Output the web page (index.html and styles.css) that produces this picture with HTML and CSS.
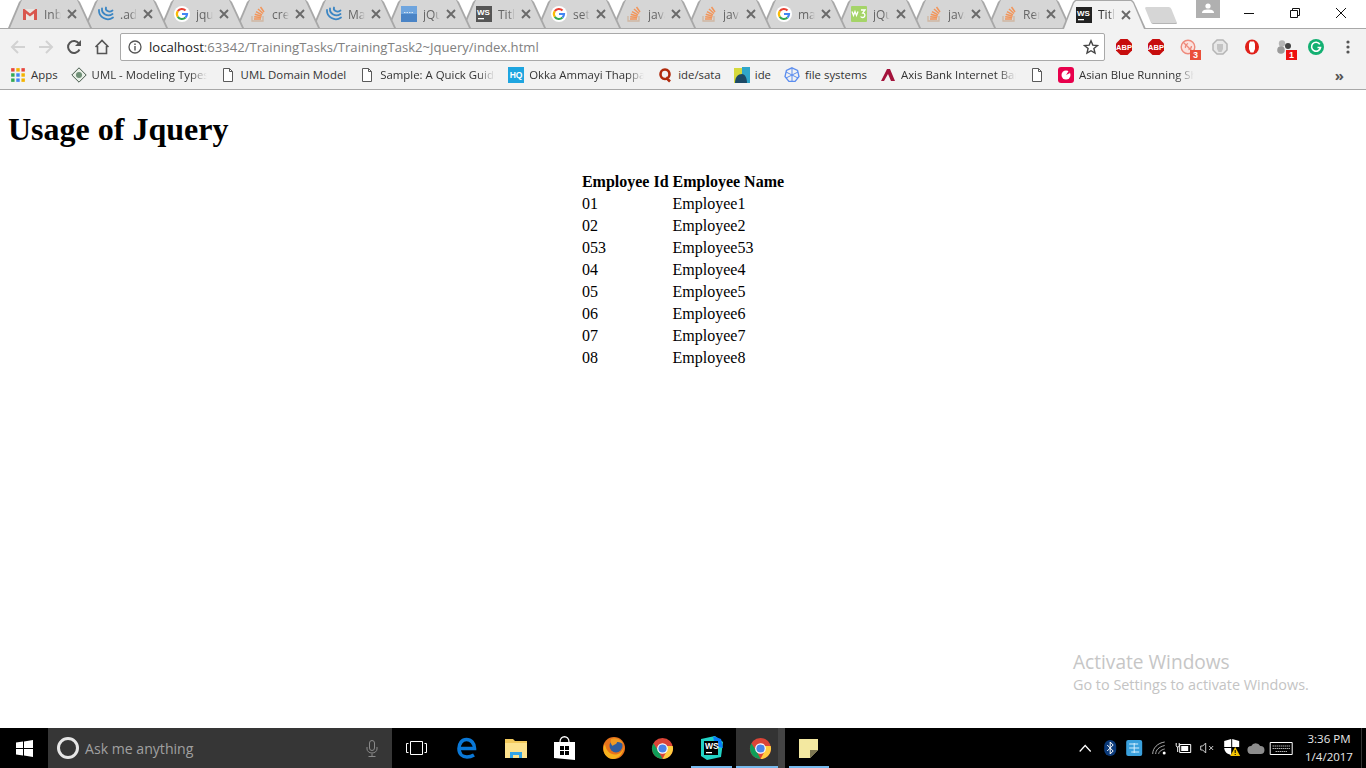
FILE: index.html
```html
<!DOCTYPE html>
<html lang="en">
<head>
    <meta charset="UTF-8">
    <title>Usage of Jquery</title>
    <link rel="stylesheet" href="styles.css">
</head>
<body>
    <svg class="defs" width="0" height="0">
        <symbol id="i-gmail" viewBox="0 0 16 16"><path fill="#e9e6e2" d="M1 3h14v11H1z"/><path fill="#d9574e" d="M1 3v11h3V7.5l4 3 4-3V14h3V3h-1.500L8 7.500 2.500 3z"/></symbol>
        <symbol id="i-jq" viewBox="0 0 16 16"><g fill="none" stroke="#3b86c4" stroke-width="1.800" stroke-linecap="round"><path d="M1 4c-.5 7 8 12 14 7.500"/><path d="M4 2.500c-.5 5 5.500 9 10.500 5.500"/><path d="M8 1.500c-1 3 3 5.500 6.500 3"/></g></symbol>
        <symbol id="i-g" viewBox="0 0 16 16"><circle cx="8" cy="8" r="8" fill="#fff"/><g fill="none" stroke-width="2.200"><path stroke="#e94235" d="M3.800 5.200A5 5 0 0 1 11.500 4.500"/><path stroke="#fabb05" d="M3.800 10.800a5 5 0 0 1 0-5.600"/><path stroke="#34a853" d="M3.800 10.800a5 5 0 0 0 7.700.7"/><path stroke="#4285f4" d="M11.500 11.500A5 5 0 0 0 13 8H8"/></g></symbol>
        <symbol id="i-so" viewBox="0 0 16 16"><path fill="none" stroke="#cfb7a2" stroke-width="1.300" d="M2 10v5h11v-5"/><g fill="none" stroke="#f2955a" stroke-width="1.500"><path d="M4 13h7"/><path d="M4.200 10.800l7 .8"/><path d="M4.800 8.200l6.800 2"/><path d="M6 5.600l6 3.200"/><path d="M8 3l5 4.500"/><path d="M10.500 1l3.500 5"/></g></symbol>
        <symbol id="i-ws" viewBox="0 0 16 16"><path fill="currentColor" d="M0 0h16v16H0z"/><text x="1" y="9" class="ws-text">WS</text><path fill="#fff" d="M2 12h6v1.300H2z"/></symbol>
        <symbol id="i-jqbox" viewBox="0 0 16 16"><path fill="#6fa5de" d="M0 0h16v16H0z"/><path fill="#4a84c6" d="M0 8h16v8H0z"/><path stroke="#d8e6f5" d="M3 6.500h10" stroke-dasharray="1.500 1"/></symbol>
        <symbol id="i-w3" viewBox="0 0 16 16"><rect width="16" height="16" rx="1" fill="#a5d468"/><path fill="none" stroke="#fff" stroke-width="1.300" d="M1 5.500l1.500 4 1.500-4 1.500 4 1.500-4M10 4h4l-2.200 3c2.600-.2 3 4.500-.3 4.500-1 0-1.500-.4-1.900-1"/></symbol>
        <symbol id="i-page" viewBox="0 0 16 16"><path fill="#fff" stroke="#5a5a5a" d="M3.500 1.500h6l3 3v10h-9z"/><path fill="none" stroke="#5a5a5a" d="M9.500 1.500v3h3"/></symbol>
        <symbol id="i-chrome" viewBox="0 0 24 24"><circle cx="12" cy="12" r="11" fill="#db4437"/><path fill="#ffcd40" d="M22.700 9.500A11 11 0 0 1 12 23l5-9.500-.5-4z"/><path fill="#0f9d58" d="M2.500 6.500L8 15l4 8a11 11 0 0 1-9.500-16.500z"/><circle cx="12" cy="12" r="5.600" fill="#fff"/><circle cx="12" cy="12" r="4.300" fill="#4a83e8"/></symbol>
        <symbol id="i-abp" viewBox="0 0 18 18"><path fill="#c70d0d" d="M5.500 1h7L17 5.500v7L12.500 17h-7L1 12.500v-7z"/><text x="9" y="11.800" class="abp-text">ABP</text></symbol>
        <symbol id="i-x" viewBox="0 0 10 10"><path fill="none" stroke="#6a6a6a" stroke-width="1.900" d="M1 1l8 8M9 1L1 9"/></symbol>
    </svg>

    <div class="tabstrip">
        <div class="tab"><svg class="fav"><use href="#i-gmail"/></svg><span class="tab-title">Inbox</span><svg class="tab-x"><use href="#i-x"/></svg></div>
        <div class="tab"><svg class="fav"><use href="#i-jq"/></svg><span class="tab-title">.add</span><svg class="tab-x"><use href="#i-x"/></svg></div>
        <div class="tab"><svg class="fav"><use href="#i-g"/></svg><span class="tab-title">jquery</span><svg class="tab-x"><use href="#i-x"/></svg></div>
        <div class="tab"><svg class="fav"><use href="#i-so"/></svg><span class="tab-title">create</span><svg class="tab-x"><use href="#i-x"/></svg></div>
        <div class="tab"><svg class="fav"><use href="#i-jq"/></svg><span class="tab-title">Manip</span><svg class="tab-x"><use href="#i-x"/></svg></div>
        <div class="tab"><svg class="fav"><use href="#i-jqbox"/></svg><span class="tab-title">jQuery</span><svg class="tab-x"><use href="#i-x"/></svg></div>
        <div class="tab"><svg class="fav ws-dim"><use href="#i-ws"/></svg><span class="tab-title">Title</span><svg class="tab-x"><use href="#i-x"/></svg></div>
        <div class="tab"><svg class="fav"><use href="#i-g"/></svg><span class="tab-title">set</span><svg class="tab-x"><use href="#i-x"/></svg></div>
        <div class="tab"><svg class="fav"><use href="#i-so"/></svg><span class="tab-title">java</span><svg class="tab-x"><use href="#i-x"/></svg></div>
        <div class="tab"><svg class="fav"><use href="#i-so"/></svg><span class="tab-title">java</span><svg class="tab-x"><use href="#i-x"/></svg></div>
        <div class="tab"><svg class="fav"><use href="#i-g"/></svg><span class="tab-title">make</span><svg class="tab-x"><use href="#i-x"/></svg></div>
        <div class="tab"><svg class="fav"><use href="#i-w3"/></svg><span class="tab-title">jQuery</span><svg class="tab-x"><use href="#i-x"/></svg></div>
        <div class="tab"><svg class="fav"><use href="#i-so"/></svg><span class="tab-title">java</span><svg class="tab-x"><use href="#i-x"/></svg></div>
        <div class="tab"><svg class="fav"><use href="#i-so"/></svg><span class="tab-title">Remove</span><svg class="tab-x"><use href="#i-x"/></svg></div>
        <div class="tab active"><svg class="fav ws-dark"><use href="#i-ws"/></svg><span class="tab-title">Title</span><svg class="tab-x"><use href="#i-x"/></svg></div>
        <div class="newtab"></div>
        <div class="profile">
            <svg width="12" height="10" viewBox="0 0 12 10"><circle cx="6" cy="3" r="2.600" fill="#fff"/><path fill="#fff" d="M0 10c0-3 3-3.500 6-3.500s6 .5 6 3.500z"/></svg>
        </div>
        <div class="winbtn"><svg width="10" height="10" viewBox="0 0 10 10"><path stroke="#111" d="M0 5.500h10"/></svg></div>
        <div class="winbtn"><svg width="10" height="10" viewBox="0 0 10 10"><path fill="none" stroke="#111" d="M.5 2.500h7v7h-7zM2.500 2.500v-2h7v7h-2"/></svg></div>
        <div class="winbtn"><svg width="10" height="10" viewBox="0 0 10 10"><path stroke="#111" d="M0 0l10 10M10 0L0 10"/></svg></div>
    </div>

    <div class="toolbar">
        <div class="navbtn"><svg width="16" height="16" viewBox="0 0 16 16"><path fill="none" stroke="#d2d2d2" stroke-width="2" d="M15 8H2M8 2L2 8l6 6"/></svg></div>
        <div class="navbtn"><svg width="16" height="16" viewBox="0 0 16 16"><path fill="none" stroke="#d2d2d2" stroke-width="2" d="M1 8h13M8 2l6 6-6 6"/></svg></div>
        <div class="navbtn"><svg width="16" height="16" viewBox="0 0 16 16"><path fill="none" stroke="#555" stroke-width="2" d="M13.500 10.500A6 6 0 1 1 13 4.500"/><path fill="#555" d="M15 1v6H9z"/></svg></div>
        <div class="navbtn"><svg width="16" height="16" viewBox="0 0 16 16"><path fill="none" stroke="#555" stroke-width="1.600" d="M1.500 8L8 1.500 14.500 8M3.500 7v7.500h9V7"/></svg></div>
        <div class="omnibox">
            <svg class="info" width="14" height="14" viewBox="0 0 14 14"><circle cx="7" cy="7" r="6" fill="none" stroke="#555" stroke-width="1.300"/><path fill="#555" d="M6.300 6h1.400v4.500H6.300zM6.300 3.500h1.400v1.400H6.300z"/></svg>
            <span class="url"><span class="host">localhost</span>:63342/TrainingTasks/TrainingTask2~Jquery/index.html</span>
            <svg class="star" width="16" height="16" viewBox="0 0 16 16"><path fill="none" stroke="#444" stroke-width="1.400" d="M8 1.800l1.800 4.300 4.700.4-3.600 3 1.100 4.600L8 11.700l-4 2.400 1.100-4.600-3.600-3 4.700-.4z"/></svg>
        </div>
        <div class="ext"><svg width="18" height="18"><use href="#i-abp"/></svg></div>
        <div class="ext"><svg width="18" height="18"><use href="#i-abp"/></svg></div>
        <div class="ext">
            <svg width="16" height="16" viewBox="0 0 16 16"><circle cx="8" cy="8" r="6.800" fill="#fbe3df" stroke="#ee8a7c" stroke-width="1.400"/><path fill="none" stroke="#ee8a7c" stroke-width="1.300" d="M3 3l10 10M8 4.500c-2 1-3 2.500-2.500 4.500M11.500 7c0 2-1 3-3 3.500"/></svg>
            <span class="badge orange">3</span>
        </div>
        <div class="ext"><svg width="16" height="16" viewBox="0 0 16 16"><path fill="#e8e8e8" stroke="#b5b5b5" stroke-width="1.500" d="M5 1h6l4 4v6l-4 4H5l-4-4V5z"/><path fill="#c4c4c4" d="M5 5h6v5l-1.500 3h-3L5 10z"/></svg></div>
        <div class="ext"><svg width="16" height="16" viewBox="0 0 16 16"><ellipse cx="8" cy="8" rx="7" ry="7.500" fill="#e0201a"/><path fill="#fff" d="M5 5l1-2.500h4L11 5v5l-1.500 3.500h-3L5 10z"/></svg></div>
        <div class="ext">
            <svg width="16" height="16" viewBox="0 0 16 16"><circle cx="6" cy="4.500" r="3.200" fill="#b5b5b5"/><circle cx="12" cy="7" r="3" fill="#444"/><circle cx="5" cy="11" r="3.800" fill="#9a9a9a"/></svg>
            <span class="badge red">1</span>
        </div>
        <div class="ext"><svg width="16" height="16" viewBox="0 0 16 16"><circle cx="8" cy="8" r="8" fill="#13b072"/><path fill="none" stroke="#fff" stroke-width="1.600" d="M11.800 5.200A4.500 4.500 0 1 0 12.500 8.500H9.500"/></svg></div>
        <div class="ext"><svg width="4" height="14" viewBox="0 0 4 14"><circle cx="2" cy="2" r="1.600" fill="#555"/><circle cx="2" cy="7" r="1.600" fill="#555"/><circle cx="2" cy="12" r="1.600" fill="#555"/></svg></div>
    </div>

    <div class="bookmarks">
        <div class="bm"><svg class="fav" viewBox="0 0 14 14"><g><path fill="#e8453c" d="M1 1h3v3H1z"/><path fill="#f4b400" d="M5.500 1h3v3h-3z"/><path fill="#e8453c" d="M10 1h3v3h-3z"/><path fill="#34a853" d="M1 5.500h3v3H1z"/><path fill="#4285f4" d="M5.500 5.500h3v3h-3z"/><path fill="#f4b400" d="M10 5.500h3v3h-3z"/><path fill="#34a853" d="M1 10h3v3H1z"/><path fill="#4285f4" d="M5.500 10h3v3h-3z"/><path fill="#f4b400" d="M10 10h3v3h-3z"/></g></svg><span>Apps</span></div>
        <div class="bm"><svg class="fav" viewBox="0 0 16 16"><path fill="#e8efe6" stroke="#45584a" d="M8 .8L15.200 8 8 15.200.8 8z"/><circle cx="8" cy="8" r="3" fill="#6f8f76"/></svg><span class="cut">UML - Modeling Types</span></div>
        <div class="bm"><svg class="fav"><use href="#i-page"/></svg><span>UML Domain Model</span></div>
        <div class="bm"><svg class="fav"><use href="#i-page"/></svg><span class="cut">Sample: A Quick Guide</span></div>
        <div class="bm"><svg class="fav" viewBox="0 0 16 16"><path fill="#1ea5e0" d="M0 0h16v16H0z"/><text x="8" y="11" class="hq-text">HQ</text></svg><span class="cut">Okka Ammayi Thappa</span></div>
        <div class="bm"><svg class="fav" viewBox="0 0 16 16"><path fill="none" stroke="#b02a0c" stroke-width="2.600" d="M8 2.500c-6 0-6 9.500 0 9.500s6-9.500 0-9.500zM9 10.500l4 4"/></svg><span>ide/sata</span></div>
        <div class="bm"><svg class="fav" viewBox="0 0 16 16"><path fill="#d5d93c" d="M0 1h8v15H0z"/><path fill="#2fa6c9" d="M8 0h8v16H8z"/><path fill="#1d4a66" d="M1 16c0-6 3-9 7-9 3 0 5 4 5 9z"/></svg><span>ide</span></div>
        <div class="bm"><svg class="fav" viewBox="0 0 16 16"><g fill="none" stroke="#5b8def"><path stroke-width="1.300" d="M8 .8l5.600 2.700L15 9.500l-3.900 4.900H4.900L1 9.500l1.400-6z"/><path d="M8 1v14M2 5l12 6M14 5L2 11"/></g></svg><span>file systems</span></div>
        <div class="bm"><svg class="fav" viewBox="0 0 16 16"><path fill="#a4133c" d="M7 2L1 14h3l4-7 3 7h4L10 2z"/></svg><span class="cut">Axis Bank Internet Banking</span></div>
        <div class="bm"><svg class="fav"><use href="#i-page"/></svg></div>
        <div class="bm"><svg class="fav" viewBox="0 0 16 16"><rect width="16" height="16" rx="3" fill="#e8004c"/><circle cx="8" cy="8" r="4.500" fill="#fff"/><path fill="#e8004c" d="M8 8l4-2-1-2.500z"/></svg><span class="cut">Asian Blue Running Shoes</span></div>
        <div class="chevron">»</div>
    </div>

    <main class="page">
        <h1>Usage of Jquery</h1>
        <table class="emp-table">
            <thead>
                <tr><th>Employee Id</th><th>Employee Name</th></tr>
            </thead>
            <tbody>
                <tr><td>01</td><td>Employee1</td></tr>
                <tr><td>02</td><td>Employee2</td></tr>
                <tr><td>053</td><td>Employee53</td></tr>
                <tr><td>04</td><td>Employee4</td></tr>
                <tr><td>05</td><td>Employee5</td></tr>
                <tr><td>06</td><td>Employee6</td></tr>
                <tr><td>07</td><td>Employee7</td></tr>
                <tr><td>08</td><td>Employee8</td></tr>
            </tbody>
        </table>
        <div class="activate">
            <div class="activate-title">Activate Windows</div>
            <div class="activate-sub">Go to Settings to activate Windows.</div>
        </div>
    </main>

    <div class="taskbar">
        <div class="start"><svg width="17" height="17" viewBox="0 0 17 17"><path fill="#fff" d="M0 2.500L7 1.500v6.500H0zM8 1.400L17 0v8H8zM0 9h7v6.500l-7-1zM8 9h9v8l-9-1.400z"/></svg></div>
        <div class="search">
            <span class="cortana"></span>
            <span class="search-text">Ask me anything</span>
            <svg class="mic" width="12" height="17" viewBox="0 0 12 17"><g fill="none" stroke="#8a8a8a"><rect x="3.500" y=".5" width="5" height="10" rx="2.500"/><path d="M1 7v2a5 4 0 0 0 10 0V7M6 13.500v3M2.500 16.500h7"/></g></svg>
        </div>
        <div class="slot taskview"><svg width="21" height="14" viewBox="0 0 21 14"><path fill="none" stroke="#fff" d="M4.500.5h12v13h-12zM2.500 2.500H.5v9h2M18.500 2.500h2v9h-2"/></svg></div>
        <div class="slot"><svg width="20" height="22" viewBox="0 0 20 22"><path fill="none" stroke="#0a78d7" stroke-width="3.600" d="M2 11.500h15.500C17.500 6 14 2.500 9.500 2.500 5 2.500 2 6.500 2 11.500c0 5.500 3.500 8.500 8 8.500 3 0 5-.8 7-2"/></svg></div>
        <div class="slot"><svg width="22" height="20" viewBox="0 0 22 20"><path fill="#f2c95c" d="M0 1h8l2 2h12v4H0z"/><path fill="#fde28e" d="M0 5h22v15H0z"/><path fill="#35a5e6" d="M5 20v-6h12v6h-3v-3H8v3z"/></svg></div>
        <div class="slot"><svg width="21" height="24" viewBox="0 0 21 24"><path fill="none" stroke="#fff" stroke-width="1.300" d="M6 6c0-7 9-7 9 0"/><path fill="#fff" d="M0 6h21v18L0 22z"/><path fill="#000" d="M6 10h4v4H6zM11 10h4v4h-4zM6 15h4v4H6zM11 15h4v4h-4z"/></svg></div>
        <div class="slot"><svg width="22" height="22" viewBox="0 0 22 22"><circle cx="11" cy="11" r="11" fill="#e8731c"/><circle cx="13" cy="9" r="6.500" fill="#2f5d9e"/><path fill="#f7b21e" d="M2 7c1 8 7 12 13 10 3-1 5-4 6-7-1 7-6 12-11 12C3 22-2 14 2 7z"/><path fill="#f09a22" d="M8 2c5-2 10 0 12 5-3-2-5-2-6-2 0 3-4 2-4 4-2-1-3-4-2-7z"/></svg></div>
        <div class="slot"><svg width="23" height="23"><use href="#i-chrome"/></svg></div>
        <div class="slot slot-ws"><svg width="24" height="24" viewBox="0 0 24 24"><path fill="#22d3c5" d="M2 3l14-3 8 6-2 15-14 3-6-4z"/><path fill="#087cfa" d="M14 0l8 3 2 9-8-2z"/><path fill="#000" d="M5 5h14v14H5z"/><text x="6" y="13" class="ws-big">WS</text><path fill="#fff" d="M7 16h6v1.300H7z"/></svg></div>
        <div class="slot running"><svg width="23" height="23"><use href="#i-chrome"/></svg></div>
        <div class="slot slot-sticky"><svg width="19" height="19" viewBox="0 0 19 19"><path fill="#f3e8a0" d="M0 0h19v11l-8 8H0z"/><path fill="#7d7652" d="M19 11h-8v8z"/></svg></div>
        <div class="tray">
            <svg class="tray-i" height="8" viewBox="0 0 13 8"><path fill="none" stroke="#fff" stroke-width="1.200" d="M1 7.500l5.500-6 5.500 6"/></svg>
            <svg class="tray-i" height="16" viewBox="0 0 12 16"><rect width="12" height="16" rx="6" fill="#0b3a7a"/><path fill="none" stroke="#fff" d="M3 5l6 6-3 3V2l3 3-6 6"/></svg>
            <svg class="tray-i" height="16" viewBox="0 0 16 16"><rect width="16" height="16" rx="2" fill="#3aa0dc"/><path fill="none" stroke="#d6f0ff" d="M3 4h9M3 8h10M5 12h8M8 3v10"/></svg>
            <svg class="tray-i" height="14" viewBox="0 0 15 14"><g fill="none" stroke="#aaa"><path d="M1 13C1 7 6 2 13 1"/><path d="M4 13c0-4 3-7 9-8.500"/><path d="M7 13c0-2 2-4 6-5"/></g><circle cx="12.500" cy="12" r="1.500" fill="#fff"/></svg>
            <svg class="tray-i" height="12" viewBox="0 0 16 12"><path fill="none" stroke="#fff" d="M4.500 2.500h11v8h-11z"/><path fill="#fff" d="M6 4h7v5H6z"/><path fill="none" stroke="#fff" d="M1 1v2.500a1.500 1.500 0 0 0 3 0V1M2.500 5v5"/></svg>
            <svg class="tray-i" height="12" viewBox="0 0 15 12"><path fill="none" stroke="#ccc" d="M1 4v4h2l3 3V1L3 4zM9.500 4l4 4M13.500 4l-4 4"/></svg>
            <svg class="tray-i" height="18" viewBox="0 0 16 18"><path fill="#fff" d="M0 2l7-2v8H0zM8 0l7 2v6H8zM0 9h7v7C3 15 .5 13 0 9z"/><path fill="#f7c600" d="M11 8l5 9H6z"/><path fill="#000" d="M10.500 11h1v3h-1zM10.500 15h1v1h-1z"/></svg>
            <svg class="tray-i" height="11" viewBox="0 0 17 11"><path fill="#8c8c8c" d="M4 11a4 4 0 0 1-.5-8A5 5 0 0 1 12.500 3 4 4 0 0 1 13 11z"/></svg>
            <svg class="tray-i" height="13" viewBox="0 0 23 13"><path fill="none" stroke="#fff" d="M.5.500h22v12H.5z"/><path stroke="#fff" stroke-dasharray="1 1" d="M3 4h17M3 6.500h17M6 9.500h11"/></svg>
        </div>
        <div class="clock"><div>3:36 PM</div><div>1/4/2017</div></div>
        <div class="desktop-edge"></div>
    </div>
</body>
</html>
```

FILE: styles.css
```css
* {
    box-sizing: border-box;
}
html, body {
    height: 100%;
}
body {
    margin: 0;
    display: flex;
    flex-direction: column;
    overflow: hidden;
    background-color: #fff;
    font-family: "Open Sans", sans-serif;
    font-size: 12px;
    color: #333;
}
.defs {
    position: absolute;
}
.fav {
    width: 16px;
    height: 16px;
    flex: none;
}

/* tab strip */
.tabstrip {
    display: flex;
    align-items: flex-start;
    height: 29px;
    padding-left: 7px;
    border-bottom: 1px solid #a8a8a8;
    flex: none;
}
.tab {
    position: relative;
    isolation: isolate;
    display: flex;
    align-items: center;
    width: 85px;
    height: 28px;
    margin-right: -10px;
    padding-left: 15px;
    flex: none;
    color: #666;
}
.tab:nth-child(-n+4) {
    margin-right: -9px;
}
/* tabs left of the active one sit over their right neighbour */
.tab:nth-child(1) { z-index: 14; }
.tab:nth-child(2) { z-index: 13; }
.tab:nth-child(3) { z-index: 12; }
.tab:nth-child(4) { z-index: 11; }
.tab:nth-child(5) { z-index: 10; }
.tab:nth-child(6) { z-index: 9; }
.tab:nth-child(7) { z-index: 8; }
.tab:nth-child(8) { z-index: 7; }
.tab:nth-child(9) { z-index: 6; }
.tab:nth-child(10) { z-index: 5; }
.tab:nth-child(11) { z-index: 4; }
.tab:nth-child(12) { z-index: 3; }
.tab:nth-child(13) { z-index: 2; }
.tab:nth-child(14) { z-index: 1; }
.tab.active { z-index: 20; }
.tab::before,
.tab::after {
    content: "";
    position: absolute;
    inset: 0;
    z-index: -1;
}
.tab::before {
    background-color: #a8a8a8;
    clip-path: polygon(1px 100%, 12px 2px, 14px 0, calc(100% - 14px) 0, calc(100% - 12px) 2px, 100% 100%);
}
.tab::after {
    background-color: #d6d6d6;
    clip-path: polygon(3px 100%, 14px 2px, 15px 0, calc(100% - 15px) 0, calc(100% - 14px) 2px, calc(100% - 2px) 100%);
}
.tab.active {
    color: #333;
    height: 29px;
}
.tab.active::after {
    background-color: #f2f2f2;
    clip-path: polygon(3px 100%, 13px 3px, 15px 1px, calc(100% - 15px) 1px, calc(100% - 13px) 3px, calc(100% - 2px) 100%);
}
.tab-title {
    width: 17px;
    margin-left: 6px;
    overflow: hidden;
    white-space: nowrap;
    -webkit-mask-image: linear-gradient(to right, #000 60%, transparent);
    mask-image: linear-gradient(to right, #000 60%, transparent);
}
.tab-x {
    width: 10px;
    height: 10px;
    margin-left: 6px;
    flex: none;
}
.ws-dim { color: #555; }
.ws-dark { color: #222; }
.ws-text {
    font: bold 8px "Liberation Sans", sans-serif;
    fill: #fff;
}
.newtab {
    width: 26px;
    height: 17px;
    margin: 7px 0 0 12px;
    background-color: #d6d6d6;
    border-bottom: 1px solid #b5b5b5;
    transform: skewX(22deg);
    border-radius: 2px;
    flex: none;
}
.profile {
    display: flex;
    align-items: center;
    justify-content: center;
    width: 24px;
    height: 18px;
    margin-left: auto;
    margin-right: 6px;
    padding-bottom: 2px;
    background-color: #b0b0b0;
    flex: none;
}
.winbtn {
    display: flex;
    align-items: center;
    justify-content: center;
    width: 46px;
    height: 26px;
    flex: none;
}
.winbtn:last-child {
    margin-right: 2px;
}

/* toolbar */
.toolbar {
    display: flex;
    align-items: center;
    height: 33px;
    padding: 3px 2px 0 4px;
    background-color: #f2f2f2;
    flex: none;
}
.navbtn {
    display: flex;
    align-items: center;
    justify-content: center;
    width: 28px;
    height: 28px;
    flex: none;
}
.omnibox {
    display: flex;
    align-items: center;
    flex: 1;
    height: 28px;
    margin: 0 3px 0 4px;
    padding: 0 5px 0 7px;
    background-color: #fff;
    border: 1px solid #a9a9a9;
    border-radius: 2px;
}
.url {
    margin-left: 7px;
    font-size: 13.100px;
    color: #808080;
}
.host {
    color: #222;
}
.star {
    margin-left: auto;
}
.ext {
    position: relative;
    display: flex;
    align-items: center;
    justify-content: center;
    width: 32px;
    height: 28px;
    flex: none;
}
.abp-text {
    font: bold 7.500px "Liberation Sans", sans-serif;
    fill: #fff;
    text-anchor: middle;
}
.badge {
    position: absolute;
    left: 18px;
    top: 17px;
    width: 11px;
    height: 10px;
    color: #fff;
    font: bold 9px/10px "Liberation Sans", sans-serif;
    text-align: center;
}
.badge.orange { background-color: #ea4f39; }
.badge.red { background-color: #ee1111; }

/* bookmarks bar */
.bookmarks {
    display: flex;
    align-items: center;
    gap: 13px;
    height: 28px;
    padding: 0 0 2px 10px;
    background-color: #f2f2f2;
    border-bottom: 1px solid #a8a8a8;
    font-size: 11.400px;
    flex: none;
}
.bm {
    display: flex;
    align-items: center;
    gap: 5px;
    white-space: nowrap;
    flex: none;
    color: #333;
}
.cut {
    width: 115px;
    overflow: hidden;
    -webkit-mask-image: linear-gradient(to right, #000 85%, transparent);
    mask-image: linear-gradient(to right, #000 85%, transparent);
}
.hq-text {
    font: bold 8.500px "Liberation Sans", sans-serif;
    fill: #fff;
    text-anchor: middle;
}
.chevron {
    margin-left: auto;
    margin-right: 22px;
    font-size: 15px;
    font-weight: bold;
    color: #555;
}

/* the page itself */
.page {
    position: relative;
    flex: 1;
    padding: 0 8px;
    font-family: "Liberation Serif", serif;
    font-size: 16px;
    color: #000;
}
.emp-table {
    margin: 0 auto;
}
.emp-table th,
.emp-table td {
    text-align: left;
}
.activate {
    position: absolute;
    left: 1073px;
    top: 559px;
    font-family: "Open Sans", sans-serif;
}
.activate-title {
    font-size: 19.100px;
    line-height: 26px;
    color: #c6c6c6;
}
.activate-sub {
    font-size: 14.400px;
    line-height: 20px;
    color: #c4c4c4;
}

/* windows taskbar */
.taskbar {
    display: flex;
    align-items: center;
    height: 40px;
    background-color: #000;
    flex: none;
}
.start {
    display: flex;
    align-items: center;
    justify-content: center;
    width: 48px;
    height: 40px;
    flex: none;
}
.search {
    display: flex;
    align-items: center;
    width: 344px;
    height: 40px;
    padding: 0 14px 0 9px;
    background-color: #363636;
    flex: none;
}
.cortana {
    width: 22px;
    height: 22px;
    border: 3px solid #e6e6e6;
    border-radius: 50%;
    flex: none;
}
.search-text {
    margin-left: 6px;
    font-size: 14.100px;
    color: #a0a0a0;
}
.mic {
    margin-left: auto;
}
.slot {
    position: relative;
    display: flex;
    align-items: center;
    justify-content: center;
    width: 48.800px;
    height: 40px;
    flex: none;
}
.taskview {
    width: 51px;
    padding-right: 3px;
}
.slot-ws::after,
.running::after,
.slot-sticky::after {
    content: "";
    position: absolute;
    left: 4px;
    right: 4px;
    bottom: 0;
    height: 2px;
    background-color: #76b9ed;
}
.running {
    background: linear-gradient(to right, #333 42px, #444 42px);
}
.running::after {
    left: 0;
    right: 7px;
}
.ws-big {
    font: bold 8.500px "Liberation Sans", sans-serif;
    fill: #fff;
}
.tray {
    display: flex;
    align-items: center;
    margin-left: auto;
    flex: none;
}
.tray-i {
    width: 24.400px;
    flex: none;
}
.clock {
    width: 60px;
    margin-left: 6px;
    font-size: 11.500px;
    line-height: 18px;
    color: #e8e8e8;
    text-align: center;
    flex: none;
}
.desktop-edge {
    width: 1px;
    height: 40px;
    margin: 0 4px 0 2px;
    background-color: #333;
    flex: none;
}
```
